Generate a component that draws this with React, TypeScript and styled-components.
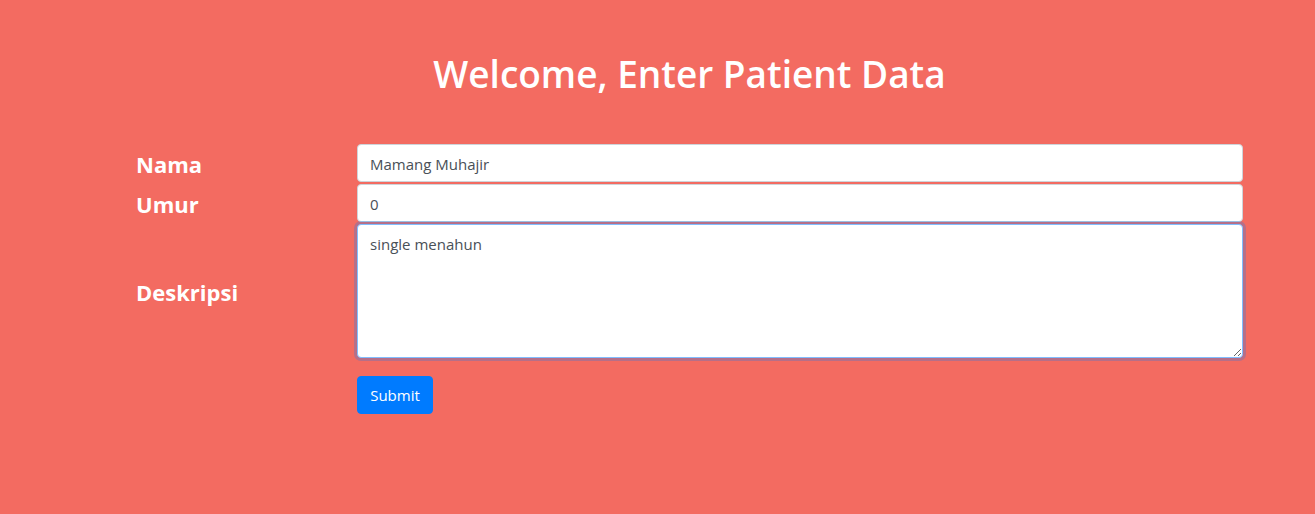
import React from "react";
import styled, { createGlobalStyle } from "styled-components";

const GlobalStyle = createGlobalStyle`
  html, body {
    margin: 0;
    padding: 0;
    background: #f36b61;
    font-family: "Open Sans", "Noto Sans", sans-serif;
  }
  * { box-sizing: border-box; }
`;

const Page = styled.div`
  min-height: 514px;
  background: #f36b61;
  padding-top: 48px;
`;

const Container = styled.div`
  width: 1107px;
  margin-left: 136px;
`;

const Title = styled.h1`
  margin: 0 0 44px;
  text-align: center;
  color: #ffffff;
  font-size: 37px;
  font-weight: 600;
  line-height: 52px;
`;

const Row = styled.div`
  display: grid;
  grid-template-columns: 221px 1fr;
  align-items: center;
  margin-bottom: 2px;
`;

const Label = styled.label`
  color: #ffffff;
  font-size: 22px;
  font-weight: 700;
  padding-top: 2px;
`;

const Input = styled.input`
  height: 38px;
  width: 100%;
  padding: 7px 12px 5px;
  border: 1px solid #ced4da;
  border-radius: 4px;
  background: #fff;
  color: #495057;
  font-family: inherit;
  font-size: 15px;
  outline: none;
`;

const TextArea = styled.textarea<{ $focused?: boolean }>`
  height: 134px;
  width: 100%;
  padding: 7px 12px 6px;
  border: 1px solid ${(p) => (p.$focused ? "#80bdff" : "#ced4da")};
  border-radius: 4px;
  background: #fff;
  color: #495057;
  font-family: inherit;
  font-size: 15px;
  line-height: 24px;
  outline: none;
  resize: vertical;
  display: block;
  box-shadow: ${(p) => (p.$focused ? "0 0 0 3px rgba(0,123,255,0.25)" : "none")};
`;

const Actions = styled.div`
  display: grid;
  grid-template-columns: 221px 1fr;
  margin-top: 18px;
`;

const Button = styled.button`
  grid-column: 2;
  justify-self: start;
  height: 38px;
  width: 76px;
  padding: 6px 12px;
  background: #007bff;
  color: #fff;
  border: 1px solid #007bff;
  border-radius: 4px;
  font-family: inherit;
  font-size: 15px;
`;

export default function App() {
  return (
    <>
      <GlobalStyle />
      <Page>
        <Container>
          <Title>Welcome, Enter Patient Data</Title>
          <Row>
            <Label>Nama</Label>
            <Input defaultValue="Mamang Muhajir" />
          </Row>
          <Row>
            <Label>Umur</Label>
            <Input defaultValue="0" />
          </Row>
          <Row>
            <Label>Deskripsi</Label>
            <TextArea $focused defaultValue="single menahun" spellCheck={false} />
          </Row>
          <Actions>
            <Button>Submit</Button>
          </Actions>
        </Container>
      </Page>
    </>
  );
}
